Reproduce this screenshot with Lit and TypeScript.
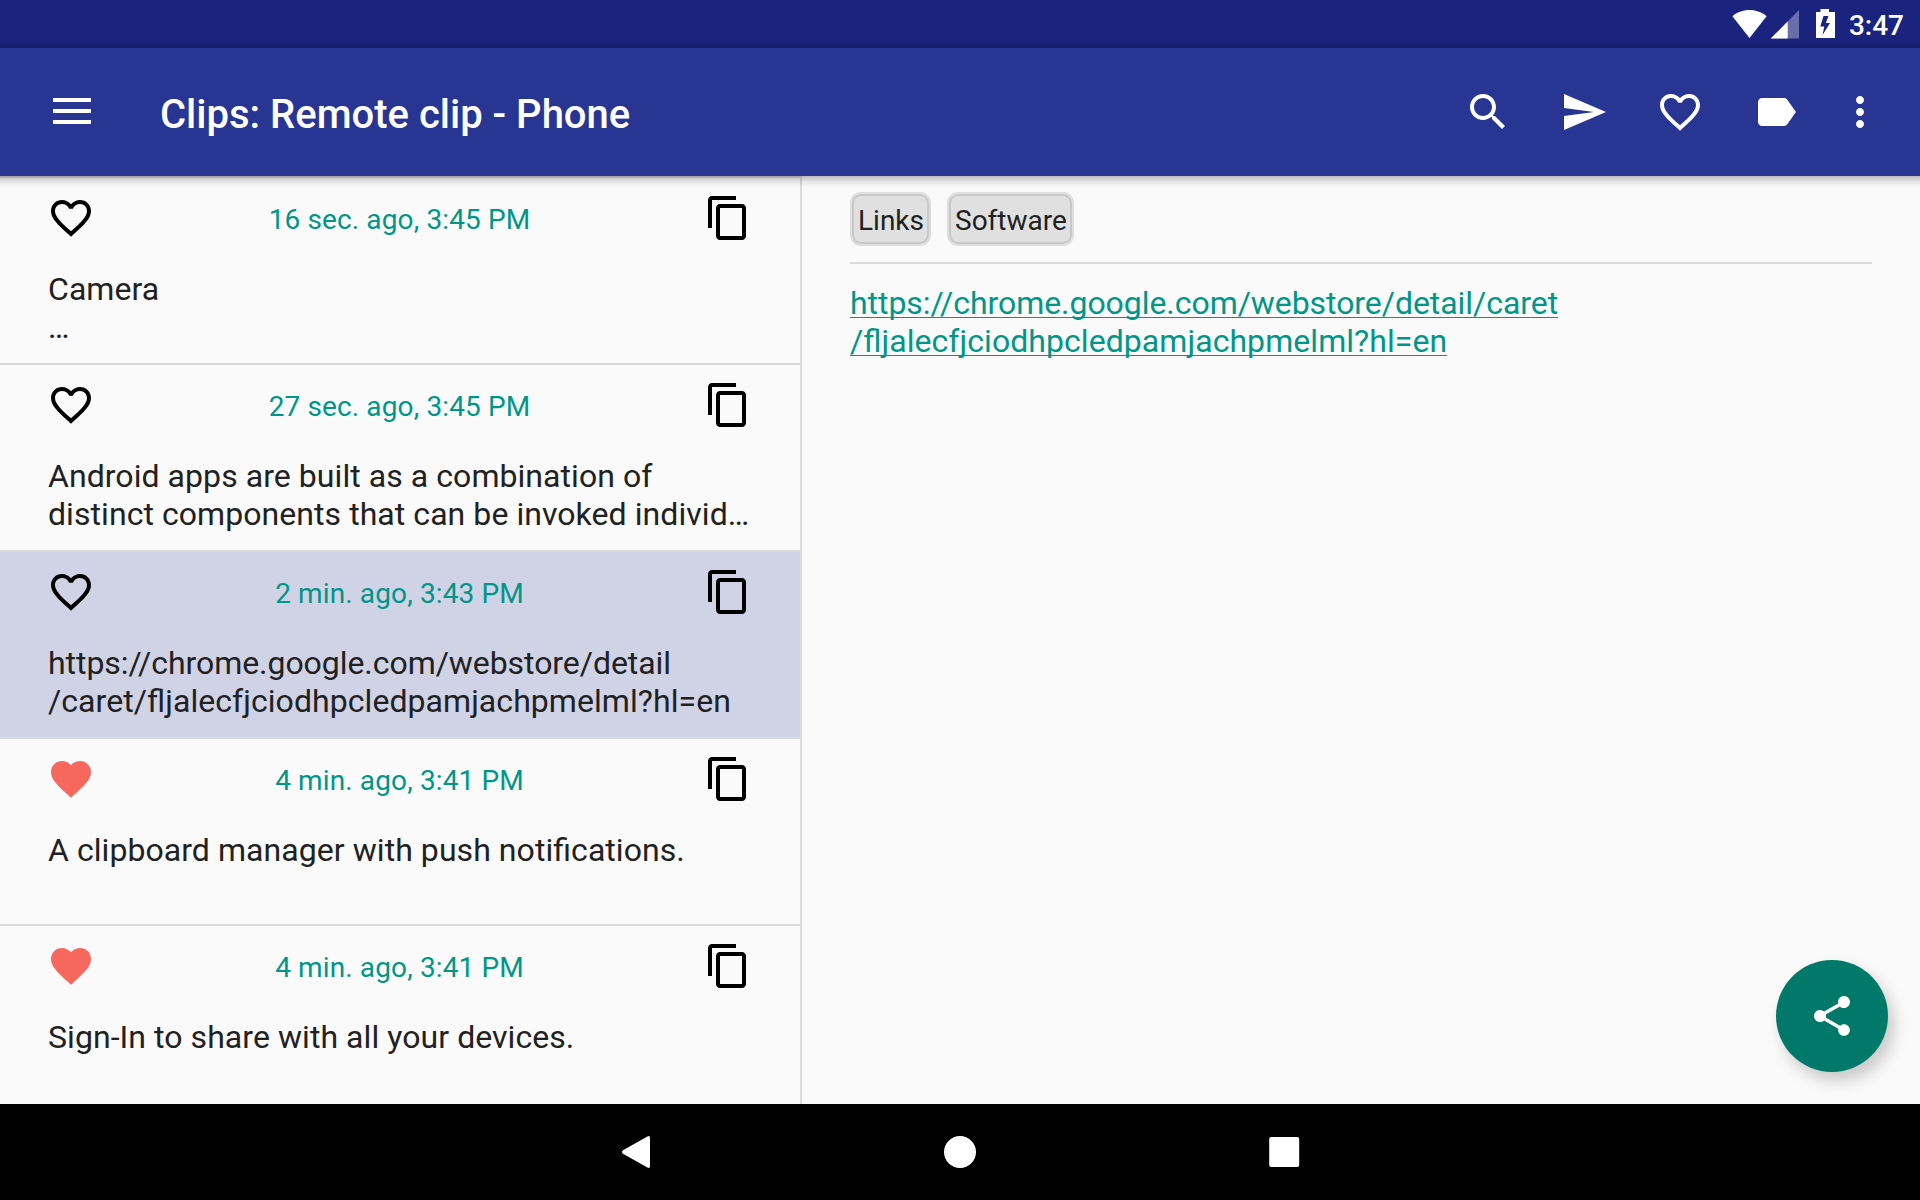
import { LitElement, html, css, svg, nothing } from "lit";
import { customElement, property, state } from "lit/decorators.js";
import { classMap } from "lit/directives/class-map.js";

const ICONS: Record<string, string> = {
  search:
    "M15.5 14h-.79l-.28-.27C15.41 12.59 16 11.11 16 9.5 16 5.91 13.09 3 9.5 3S3 5.91 3 9.5 5.91 16 9.5 16c1.61 0 3.09-.59 4.23-1.57l.27.28v.79l5 4.99L20.49 19l-4.99-5zm-6 0C7.01 14 5 11.99 5 9.5S7.01 5 9.5 5 14 7.01 14 9.5 11.99 14 9.5 14z",
  send: "M2.01 21L23 12 2.01 3 2 10l15 2-15 2z",
  heartOutline:
    "M16.5 3c-1.74 0-3.41.81-4.5 2.09C10.91 3.81 9.24 3 7.5 3 4.42 3 2 5.42 2 8.5c0 3.78 3.4 6.86 8.55 11.54L12 21.35l1.45-1.32C18.6 15.36 22 12.28 22 8.5 22 5.42 19.58 3 16.5 3zm-4.4 15.55l-.1.1-.1-.1C7.14 14.24 4 11.39 4 8.5 4 6.5 5.5 5 7.5 5c1.54 0 3.04.99 3.57 2.36h1.87C13.46 5.99 14.96 5 16.5 5c2 0 3.5 1.5 3.5 3.5 0 2.89-3.14 5.74-7.9 10.05z",
  heart:
    "M12 21.35l-1.45-1.32C5.4 15.36 2 12.28 2 8.5 2 5.42 4.42 3 7.5 3c1.74 0 3.41.81 4.5 2.09C13.09 3.81 14.76 3 16.5 3 19.58 3 22 5.42 22 8.5c0 3.78-3.4 6.86-8.55 11.54L12 21.35z",
  label:
    "M17.63 5.84C17.27 5.33 16.67 5 16 5L5 5.01C3.9 5.01 3 5.9 3 7v10c0 1.1.9 1.99 2 1.99L16 19c.67 0 1.27-.33 1.63-.84L22 12l-4.37-6.16z",
  more: "M12 8c1.1 0 2-.9 2-2s-.9-2-2-2-2 .9-2 2 .9 2 2 2zm0 2c-1.1 0-2 .9-2 2s.9 2 2 2 2-.9 2-2-.9-2-2-2zm0 6c-1.1 0-2 .9-2 2s.9 2 2 2 2-.9 2-2-.9-2-2-2z",
  copy: "M16 1H4c-1.1 0-2 .9-2 2v14h2V3h12V1zm3 4H8c-1.1 0-2 .9-2 2v14c0 1.1.9 2 2 2h11c1.1 0 2-.9 2-2V7c0-1.1-.9-2-2-2zm0 16H8V7h11v14z",
  share:
    "M18 16.08c-.76 0-1.44.3-1.96.77L8.91 12.7c.05-.23.09-.46.09-.7s-.04-.47-.09-.7l7.05-4.11c.54.5 1.25.81 2.04.81 1.66 0 3-1.34 3-3s-1.34-3-3-3-3 1.34-3 3c0 .24.04.47.09.7L8.04 9.81C7.5 9.31 6.79 9 6 9c-1.66 0-3 1.34-3 3s1.34 3 3 3c.79 0 1.5-.31 2.04-.81l7.12 4.16c-.05.21-.08.43-.08.65 0 1.61 1.31 2.92 2.92 2.92 1.61 0 2.92-1.31 2.92-2.92s-1.31-2.92-2.92-2.92z",
};

interface Clip {
  when: string;
  lines: string[];
  favorite: boolean;
}

const CLIPS: Clip[] = [
  { when: "16 sec. ago, 3:45 PM", lines: ["Camera", "…"], favorite: false },
  {
    when: "27 sec. ago, 3:45 PM",
    lines: ["Android apps are built as a combination of", "distinct components that can be invoked individ…"],
    favorite: false,
  },
  {
    when: "2 min. ago, 3:43 PM",
    lines: ["https://chrome.google.com/webstore/detail", "/caret/fljalecfjciodhpcledpamjachpmelml?hl=en"],
    favorite: false,
  },
  { when: "4 min. ago, 3:41 PM", lines: ["A clipboard manager with push notifications."], favorite: true },
  { when: "4 min. ago, 3:41 PM", lines: ["Sign-In to share with all your devices."], favorite: true },
];

/** Lines that open with a scheme are set slightly tighter than running text. */
const lineClasses = (line: string) => classMap({ line: true, tight: line.startsWith("http") });

const lineStyles = css`
  .line {
    display: block;
    width: max-content;
    letter-spacing: 0.06px;
    font-feature-settings: "liga" 1;
  }
  .line.tight {
    letter-spacing: -0.055px;
  }
`;

@customElement("md-icon")
export class MdIcon extends LitElement {
  @property() name = "";

  static styles = css`
    :host {
      display: block;
      flex: none;
      width: 48px;
      height: 48px;
    }
    .glyph {
      display: block;
      width: 100%;
      height: 100%;
      fill: currentColor;
    }
  `;

  render() {
    return html`<svg class="glyph" viewBox="0 0 24 24">${svg`<path d=${ICONS[this.name] ?? ""}></path>`}</svg>`;
  }
}

@customElement("status-bar")
export class StatusBar extends LitElement {
  static styles = css`
    :host {
      display: flex;
      align-items: flex-start;
      justify-content: flex-end;
      height: 48px;
      box-sizing: border-box;
      padding-right: 16px;
      color: #fff;
      background: linear-gradient(#1a237e 0 40px, #161e6c 48px);
    }
    .signals {
      display: block;
      width: 106px;
      height: 48px;
      margin-right: 11px;
    }
    .clock {
      font-size: 28px;
      font-weight: 500;
      line-height: 34px;
      padding-top: 9px;
      white-space: nowrap;
    }
  `;

  render() {
    return html`
      <svg class="signals" viewBox="0 0 106 48" fill="#fff">
        <path d="M0.4 16.2C5 12.3 11 10 17.5 10s12.500 2.300 17.100 6.200L17.500 38z"></path>
        <path d="M67 10v28.500H38.700z" opacity=".34"></path>
        <path d="M55.700 21.500v17H38.700z"></path>
        <path
          fill-rule="evenodd"
          d="M88.500 9h8.500v3h6v26H84V12h4.500zM91.500 16L88.300 26.500h4L90.500 35l7.500-12h-4.200L96.500 16z"
        ></path>
      </svg>
      <span class="clock">3:47</span>
    `;
  }
}

@customElement("app-toolbar")
export class AppToolbar extends LitElement {
  @property() heading = "";

  static styles = css`
    :host {
      display: flex;
      align-items: center;
      height: 128px;
      box-sizing: border-box;
      padding: 0 36px 0 48px;
      color: #fff;
      background: #283593;
    }
    .menu {
      display: block;
      flex: none;
      width: 48px;
      height: 48px;
      fill: currentColor;
    }
    .title {
      flex: 1;
      margin: 0;
      padding: 6px 0 0 64px;
      font-size: 40px;
      font-weight: 500;
      line-height: 48px;
      white-space: nowrap;
    }
    .actions {
      display: flex;
      gap: 48px;
    }
    .more {
      margin-left: -12px;
    }
  `;

  render() {
    return html`
      <svg class="menu" viewBox="0 0 48 48">
        <path d="M5 10h38v4H5zM5 21h38v4H5zM5 32h38v4H5z"></path>
      </svg>
      <h1 class="title">${this.heading}</h1>
      <div class="actions">
        <md-icon name="search"></md-icon>
        <md-icon name="send"></md-icon>
        <md-icon name="heartOutline"></md-icon>
        <md-icon name="label"></md-icon>
        <md-icon class="more" name="more"></md-icon>
      </div>
    `;
  }
}

@customElement("clip-row")
export class ClipRow extends LitElement {
  @property({ attribute: false }) clip!: Clip;
  @property({ type: Boolean, reflect: true }) selected = false;

  static styles = [
    lineStyles,
    css`
      :host {
        display: block;
        flex: none;
        height: 187px;
        box-sizing: border-box;
        border-top: 2px solid #dbdbdb;
        color: #212121;
        cursor: pointer;
      }
      :host([selected]) {
        background: #d0d2e6;
        background-clip: padding-box;
      }
      .head {
        display: flex;
        align-items: flex-start;
        justify-content: space-between;
        padding: 16px 48px 0 47px;
      }
      .icon {
        color: #000;
      }
      .icon.favorite {
        color: #f6685d;
      }
      .when {
        padding-top: 9px;
        font-size: 28px;
        line-height: 33px;
        letter-spacing: 0.13px;
        color: #009688;
        white-space: nowrap;
      }
      .text {
        padding: 28px 0 0 48px;
        font-size: 32px;
        line-height: 38px;
        white-space: nowrap;
      }
    `,
  ];

  render() {
    const { clip } = this;
    return html`
      <div class="head">
        <md-icon
          class=${classMap({ icon: true, favorite: clip.favorite })}
          name=${clip.favorite ? "heart" : "heartOutline"}
        ></md-icon>
        <span class="when">${clip.when}</span>
        <md-icon class="icon" name="copy"></md-icon>
      </div>
      <div class="text">${clip.lines.map((line) => html`<div class=${lineClasses(line)}>${line}</div>`)}</div>
    `;
  }
}

@customElement("clip-detail")
export class ClipDetail extends LitElement {
  @property({ attribute: false }) tags: string[] = [];
  @property({ attribute: false }) link: string[] = [];

  static styles = [
    lineStyles,
    css`
      :host {
        display: block;
        padding: 16px 48px 0;
      }
      .tags {
        display: flex;
        gap: 16px;
        padding-bottom: 16px;
        border-bottom: 2px solid #dbdbdb;
      }
      .tag {
        height: 54px;
        box-sizing: border-box;
        padding: 10px 5px 0 6px;
        border: 2px solid #dedede;
        border-radius: 11px;
        box-shadow: inset 0 0 0 2px #c8c8c8;
        background: #e0e0e0;
        color: #212121;
        font-size: 28px;
        line-height: 33px;
      }
      .link {
        display: block;
        padding-top: 20px;
        color: #009688;
        font-size: 32px;
        line-height: 38px;
        text-decoration: none;
      }
      .line {
        text-decoration: underline;
        text-decoration-thickness: 1px;
        text-underline-offset: 3px;
        text-decoration-skip-ink: none;
      }
    `,
  ];

  render() {
    return html`
      <div class="tags">${this.tags.map((tag) => html`<span class="tag">${tag}</span>`)}</div>
      ${this.link.length
        ? html`<a class="link" href="#"
            >${this.link.map((part) => html`<span class=${lineClasses(part)}>${part}</span>`)}</a
          >`
        : nothing}
    `;
  }
}

@customElement("nav-bar")
export class NavBar extends LitElement {
  static styles = css`
    :host {
      display: flex;
      align-items: center;
      justify-content: center;
      gap: 276px;
      height: 96px;
      background: #000;
    }
    .key {
      display: block;
      width: 48px;
      height: 48px;
      fill: #fff;
    }
  `;

  render() {
    return html`
      <svg class="key" viewBox="0 0 48 48">
        <path d="M38 10v28q0 3-2.600 1.600L11 25.800q-2-1.800 0-3.600L35.400 8.400Q38 7 38 10z"></path>
      </svg>
      <svg class="key" viewBox="0 0 48 48"><circle cx="24" cy="24" r="16"></circle></svg>
      <svg class="key" viewBox="0 0 48 48"><rect x="9.200" y="9" width="30" height="30" rx="2"></rect></svg>
    `;
  }
}

@customElement("app-root")
export class AppRoot extends LitElement {
  @state() private selected = 2;

  static styles = css`
    :host {
      display: grid;
      grid-template-rows: 48px 128px 928px 96px;
      width: 1920px;
      height: 1200px;
      overflow: hidden;
      background: #fafafa;
      font-family: Roboto, "Noto Sans", sans-serif;
    }
    .content {
      position: relative;
      display: grid;
      grid-template-columns: 800px 1fr;
      overflow: hidden;
    }
    .content::before {
      content: "";
      position: absolute;
      inset: 0 0 auto;
      height: 12px;
      background: linear-gradient(rgba(0, 0, 0, 0.25), rgba(0, 0, 0, 0.08) 50%, transparent);
      pointer-events: none;
    }
    .list {
      display: flex;
      flex-direction: column;
      overflow: hidden;
    }
    .detail {
      border-left: 2px solid #dbdbdb;
    }
    .fab {
      position: absolute;
      right: 32px;
      bottom: 32px;
      display: grid;
      place-items: center;
      width: 112px;
      height: 112px;
      padding: 0;
      border: 0;
      border-radius: 50%;
      color: #fff;
      background: #00796b;
      box-shadow: 6px 9px 16px rgba(0, 0, 0, 0.2);
    }
  `;

  render() {
    return html`
      <status-bar></status-bar>
      <app-toolbar heading="Clips: Remote clip - Phone"></app-toolbar>
      <main class="content">
        <section class="list">
          ${CLIPS.map(
            (clip, i) => html`<clip-row
              .clip=${clip}
              ?selected=${i === this.selected}
              @click=${() => (this.selected = i)}
            ></clip-row>`
          )}
        </section>
        <clip-detail
          class="detail"
          .tags=${["Links", "Software"]}
          .link=${["https://chrome.google.com/webstore/detail/caret", "/fljalecfjciodhpcledpamjachpmelml?hl=en"]}
        ></clip-detail>
        <button class="fab" aria-label="Share"><md-icon name="share"></md-icon></button>
      </main>
      <nav-bar></nav-bar>
    `;
  }
}
